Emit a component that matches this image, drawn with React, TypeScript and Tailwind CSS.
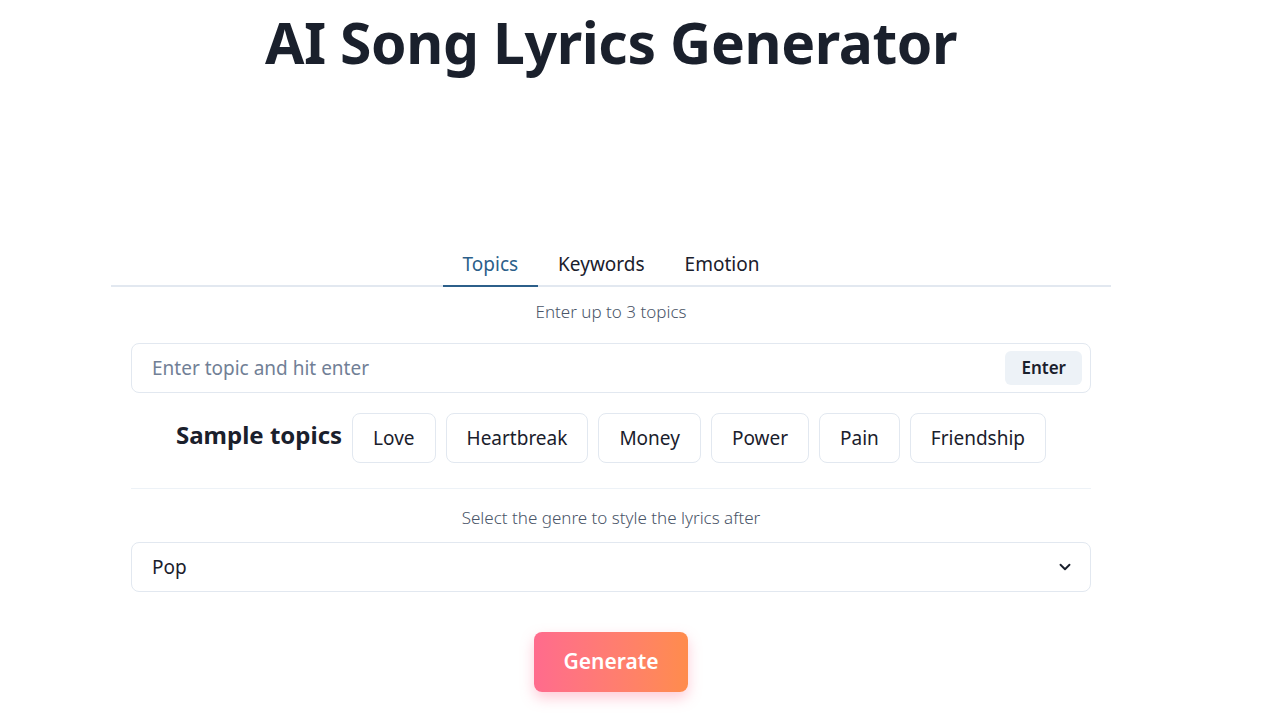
import { ChevronDown } from 'lucide-react';

const topics = ['Love', 'Heartbreak', 'Money', 'Power', 'Pain', 'Friendship'];
const tabs = ['Topics', 'Keywords', 'Emotion'];

export default function App() {
  return (
    <div className="min-h-screen bg-white text-[#1a202c]" style={{ fontFamily: '"Noto Sans", "Open Sans", sans-serif' }}>
      <div className="w-[1222px] flex flex-col items-center">
        <h1 className="mt-[2px] text-[57px] font-bold leading-[80px] tracking-[-0.4px] text-[#1a202c]">AI Song Lyrics Generator</h1>

        <div className="mt-[161px] w-[1000px] flex flex-col items-center">
          <div className="w-full flex justify-center border-b-2 border-[#e2e8f0]">
            {tabs.map((t, i) => (
              <button
                key={t}
                className={
                  i === 0
                    ? 'px-5 h-[44px] -mb-[2px] text-[19px] text-[#2c5f8a] border-b-2 border-[#2c5f8a]'
                    : 'px-5 h-[44px] -mb-[2px] text-[19px] text-[#1a202c] border-b-2 border-transparent'
                }
              >
                {t}
              </button>
            ))}
          </div>

          <p className="mt-[13px] text-[17px] font-light text-[#4a5568] leading-6">Enter up to 3 topics</p>

          <div className="mt-[19px] w-[960px] h-[50px] rounded-lg border border-[#e2e8f0] flex items-center pl-5 pr-2">
            <input
              className="flex-1 outline-none text-[19px] placeholder-[#718096] bg-transparent"
              placeholder="Enter topic and hit enter"
            />
            <button className="h-[34px] px-4 rounded-md bg-[#edf2f7] text-[17px] font-semibold text-[#1a202c]">Enter</button>
          </div>

          <div className="mt-[20px] flex items-center gap-[10px]">
            <span className="text-[24px] font-bold -mt-[6px]">Sample topics</span>
            {topics.map((t) => (
              <button key={t} className="h-[50px] px-5 rounded-lg border border-[#e2e8f0] text-[19px] bg-white">
                {t}
              </button>
            ))}
          </div>

          <div className="mt-[25px] w-[960px] border-t border-[#edf2f7]" />

          <p className="mt-[17px] text-[17px] font-light text-[#4a5568] leading-6">Select the genre to style the lyrics after</p>

          <div className="mt-[12px] w-[960px] h-[50px] rounded-lg border border-[#e2e8f0] flex items-center justify-between pl-5 pr-4">
            <span className="text-[19px]">Pop</span>
            <ChevronDown size={18} strokeWidth={2.5} className="text-[#1a202c]" />
          </div>

          <button className="mt-[40px] w-[154px] h-[60px] rounded-lg bg-gradient-to-r from-[#ff6b8d] to-[#ff8c4c] text-white text-[21px] font-semibold shadow-[0_6px_14px_rgba(255,107,141,0.35)]">
            Generate
          </button>
        </div>
      </div>
    </div>
  );
}
